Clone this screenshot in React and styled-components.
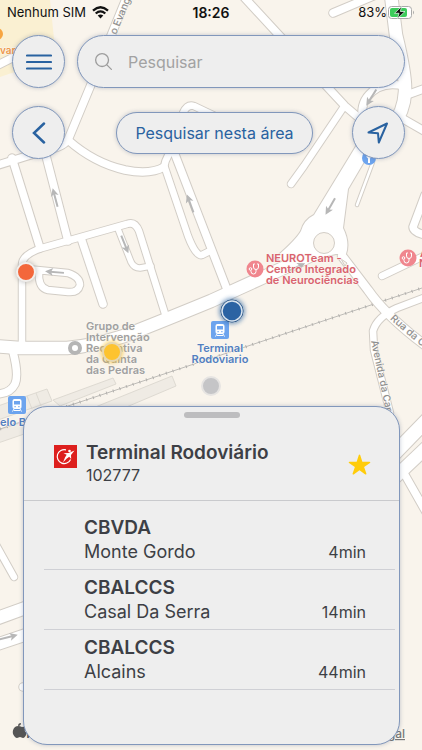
import React from "react";
import styled, { createGlobalStyle } from "styled-components";
import { IoSearchOutline, IoStar } from "react-icons/io5";

const GlobalStyle = createGlobalStyle`
  * {
    box-sizing: border-box;
  }

  body {
    margin: 0;
    background: #f9f4ec;
    font-family: Inter, "Liberation Sans", sans-serif;
    color: #3d3f45;
  }
`;

const Screen = styled.main`
  position: relative;
  min-height: 100vh;
  display: flex;
  flex-direction: column;
  overflow: hidden;
`;

const MapCanvas = styled.svg`
  position: absolute;
  top: 0;
  left: 0;
  width: 100%;
  height: 100%;
  z-index: -1;
`;

const MapLabel = styled.text`
  font-size: ${props => props.$size || 11}px;
  font-weight: ${props => props.$weight || 500};
  fill: ${props => props.$color};
  text-anchor: ${props => props.$anchor || "start"};
  stroke: #fbf8f3;
  stroke-width: 1px;
  paint-order: stroke;
`;

const StatusBar = styled.header`
  display: grid;
  grid-template-columns: 1fr auto 1fr;
  align-items: center;
  height: 24px;
  padding: 0 7px;
  font-size: 13px;
  color: #111;
`;

const StatusGroup = styled.div`
  display: flex;
  align-items: center;
  gap: ${props => props.$gap}px;
  justify-content: ${props => (props.$end ? "flex-end" : "flex-start")};
`;

const Time = styled.time`
  font-size: 14px;
  font-weight: 600;
`;

const Toolbar = styled.div`
  display: flex;
  align-items: center;
  justify-content: space-between;
  gap: 12px;
  padding: 0 17px 0 12px;
  margin-top: ${props => props.$top}px;
`;

const RoundButton = styled.button`
  display: flex;
  align-items: center;
  justify-content: center;
  flex: none;
  width: 53px;
  height: 53px;
  padding: 0;
  border: 1px solid #8197bb;
  border-radius: 50%;
  background: #eeeeee;
  color: #2962a0;
  box-shadow: 0 0 4px rgba(60, 80, 120, 0.3);
`;

const SearchBox = styled.label`
  display: flex;
  align-items: center;
  gap: 14px;
  flex: 1;
  min-width: 0;
  height: 53px;
  padding: 0 15px;
  border: 1px solid #8197bb;
  border-radius: 27px;
  background: #eeeeee;
  color: #9c9c9c;
  box-shadow: 0 0 4px rgba(60, 80, 120, 0.3);
`;

const SearchInput = styled.input`
  flex: 1;
  min-width: 0;
  padding: 0;
  border: 0;
  outline: 0;
  background: transparent;
  font: 400 16px Inter, sans-serif;
  color: #3d3f45;

  &::placeholder {
    color: #a2a2a2;
    opacity: 1;
  }
`;

const AreaButton = styled.button`
  height: 42px;
  margin-left: 12px;
  padding: 0 18px;
  border: 1px solid #8197bb;
  border-radius: 21px;
  background: #eeeeee;
  color: #2962a0;
  font: 400 16px Inter, sans-serif;
  white-space: nowrap;
  box-shadow: 0 0 4px rgba(60, 80, 120, 0.3);
`;

const Sheet = styled.section`
  margin: auto 22px 5px 23px;
  padding-bottom: 54px;
  border: 1px solid #8197bb;
  border-radius: 24px;
  background: #eeeeee;
  box-shadow: 0 0 4px rgba(60, 80, 120, 0.3);
`;

const Handle = styled.div`
  width: 56px;
  height: 6px;
  margin: 5px auto 0;
  border-radius: 3px;
  background: #bdbdbf;
`;

const StopHeader = styled.div`
  display: flex;
  align-items: center;
  gap: 9px;
  height: 83px;
  padding: 10px 28px 0 30px;
  border-bottom: 1px solid #c9cacd;
`;

const StopInfo = styled.div`
  flex: 1;
  line-height: 22px;
`;

const StopName = styled.h1`
  margin: 0;
  font-size: 19px;
  line-height: 22px;
  font-weight: 600;
`;

const StopCode = styled.div`
  font-size: 16px;
`;

const LogoSvg = styled.svg`
  display: block;
  flex: none;
  margin-bottom: 16px;
`;

const StarButton = styled.button`
  display: flex;
  padding: 0;
  border: 0;
  background: transparent;
  color: #ffcc0a;
`;

const Departures = styled.ul`
  margin: 0;
  padding: 9px 4px 0 20px;
  list-style: none;
`;

const Departure = styled.li`
  display: flex;
  align-items: flex-end;
  justify-content: space-between;
  height: 60px;
  padding: 0 29px 5px 40px;
  border-bottom: 1px solid #cfd0d5;
  line-height: 24px;
`;

const Line = styled.div`
  font-size: 19px;
  font-weight: 600;
`;

const Destination = styled.div`
  font-size: 18px;
`;

const Wait = styled.div`
  font-size: 16px;
`;

const roads = [
  { d: "M128 -6L90 87L68 140Q62 148 40 152L-5 166", w: 8 },
  { d: "M68 140Q94 163 125 170Q150 175 164 167", w: 8 },
  { d: "M164 167Q166 155 176 146L183 113Q187 104 194 106L215 116", w: 7 },
  { d: "M165 168L188 236Q196 257 202 255L210 251", w: 7 },
  { d: "M174 152L228 292", w: 8 },
  { d: "M12 158L40 248", w: 8 },
  { d: "M45 152L68 241", w: 8 },
  { d: "M-4 66L18 55", w: 8 },
  { d: "M22 348V264Q23 254 42 248L127 224Q135 221 139 231L167 320", w: 7 },
  { d: "M81 238L103 304", w: 8 },
  { d: "M118 229L131 262Q134 268 140 268L151 266", w: 6 },
  { d: "M27 269L68 273Q80 277 80 285Q78 293 68 292L48 290Q38 288 39 272", w: 7 },
  { d: "M13 352Q19 375 15 384Q10 394 -4 394", w: 8 },
  { d: "M242 -5L278 34L345 106L366 124", w: 8 },
  { d: "M343 108L304 166L291 184", w: 7 },
  { d: "M333 13L378 -6", w: 8 },
  { d: "M391 -5L396 35Q406 76 405 92Q404 112 392 126", w: 13 },
  { d: "M404 86Q380 80 367 97Q359 108 364 124", w: 8 },
  { d: "M404 96L426 88", w: 8 },
  { d: "M398 116L426 132", w: 8 },
  { d: "M373 162L357 205", w: 3 },
  { d: "M425 195L413 227Q413 232 425 235", w: 8 },
  { d: "M426 255L382 276", w: 7 },
  { d: "M426 297L397 308Q377 317 373 331L374 350L390 413", w: 7 },
  { d: "M342 256L368 290Q386 316 426 346", w: 9 },
  { d: "M405 475L426 512", w: 8 },
  { d: "M390 458L428 419", w: 14 },
  { d: "M390 482L428 446", w: 13 },
  { d: "M-5 543L14 577", w: 7 },
  { d: "M-5 619L28 607", w: 13 },
  { d: "M-5 645L28 634", w: 12 },
  { d: "M23 687H30", w: 8 },
  { d: "M-5 346L20 348H67Q93 346 124 336Q160 322 211 301L266 276L318 252", w: 13 },
];

const roundabout =
  "M361 138L314 215Q304 220 301 231Q296 240 275 258L290 264L336 254L346 254Q350 242 343 228L348 189L378 138Z";

const streetArrows = [
  { x: 55, y: 197, r: -105 },
  { x: 190, y: 203, r: -110 },
  { x: 125, y: 245, r: 68 },
  { x: 54, y: 272, r: 185 },
  { x: 371, y: 98, r: 122 },
  { x: 330, y: 207, r: 120 },
  { x: 297, y: 267, r: -24 },
  { x: 9, y: 637, r: -14 },
];

const departures = [
  { id: 1, line: "CBVDA", destination: "Monte Gordo", wait: "4min" },
  { id: 2, line: "CBALCCS", destination: "Casal Da Serra", wait: "14min" },
  { id: 3, line: "CBALCCS", destination: "Alcains", wait: "44min" },
];

const TrainBadge = ({ x, y }) => (
  <g transform={`translate(${x} ${y})`}>
    <rect width="18" height="18" rx="2" fill="#6da4ee" />
    <rect x="4.5" y="3" width="9" height="10" rx="2" fill="#fff" />
    <rect x="6" y="5" width="6" height="3.5" fill="#6da4ee" />
    <path d="M6.5 10.7h1.2M10.3 10.7h1.2" stroke="#6da4ee" strokeWidth="1.3" />
    <path d="M6 13l-1.5 2.5M12 13l1.5 2.5M6 14.5h6" stroke="#fff" />
  </g>
);

const ClinicBadge = ({ x, y }) => (
  <g transform={`translate(${x} ${y})`} fill="none" stroke="#fff">
    <circle r="8.5" fill="#f0868e" stroke="none" />
    <path d="M0-5h-1.500v3a2.500 2.500 0 0 0 5 0v-3h-1.500M1 .5v2a2.500 2.500 0 0 1-5 0v-1" />
    <circle cx="-4.500" cy="0" r="1.300" />
  </g>
);

const StreetMap = () => (
  <MapCanvas viewBox="0 0 422 750" preserveAspectRatio="xMidYMid slice">
    <defs>
      <path id="rua" d="M390 319Q406 334 434 356" />
      <path id="avenida" d="M371 341L388 422" />
      <path id="evang" d="M116 35L133 -6" />
      <filter id="glow" x="-50%" y="-50%" width="200%" height="200%">
        <feGaussianBlur stdDeviation="2" />
      </filter>
    </defs>
    <rect width="422" height="750" fill="#f9f4ec" />
    <path d="M0 0H50L56 58L0 77Z" fill="#faf0d2" />
    <g fill="#efebe4" stroke="#dedad2">
      <path d="M-2 406L47 389L52 401L-2 420ZM27 396l5 13M36 393l5 13" />
      <path d="M53 400L113 378L116 384L60 406Z" />
      <path d="M88 410L172 376L176 386L110 414Z" />
      <path d="M-2 430L30 420V432L-2 443Z" />
    </g>
    <path d="M0 429L65 407L245 347L422 288" fill="none" stroke="#bebcb8" />
    <path
      d="M0 429L65 407L245 347L422 288"
      fill="none"
      stroke="#b3b1ae"
      strokeWidth="3"
      strokeDasharray="1 6"
    />
    <g fill="none" stroke="#d2cdc6" strokeLinecap="round" strokeLinejoin="round">
      {roads.map(road => (
        <path key={road.d} d={road.d} strokeWidth={road.w + 1.5} />
      ))}
    </g>
    <path d={roundabout} fill="#fff" stroke="#d2cdc6" strokeWidth="2" />
    <g fill="none" stroke="#fff" strokeLinecap="round" strokeLinejoin="round">
      {roads.map(road => (
        <path key={road.d} d={road.d} strokeWidth={road.w - 0.5} />
      ))}
    </g>
    <path d={roundabout} fill="#fff" />
    <circle cx="324" cy="243" r="10.5" fill="#f9f4ec" stroke="#d2cdc6" />
    <path d="M341 259l6 4l-2 3z" fill="#f9f4ec" stroke="#d2cdc6" />
    {streetArrows.map(arrow => (
      <g
        key={`${arrow.x}-${arrow.y}`}
        transform={`translate(${arrow.x} ${arrow.y}) rotate(${arrow.r})`}
      >
        <path d="M-10 0H4" stroke="#b7b7b7" strokeWidth="2" />
        <path d="M9 0L1 -4L3 0L1 4Z" fill="#b7b7b7" />
      </g>
    ))}

    <MapLabel $color="#8f8f8f" $size={10}>
      <textPath href="#rua">Rua da Ca</textPath>
    </MapLabel>
    <MapLabel $color="#8f8f8f" $size={10}>
      <textPath href="#avenida">Avenida da Car</textPath>
    </MapLabel>
    <MapLabel $color="#8f8f8f" $size={10}>
      <textPath href="#evang">o Evang</textPath>
    </MapLabel>
    <circle cx="-3" cy="34" r="6" fill="#f7a541" />
    <MapLabel x="0" y="54" $color="#ee994c" $size={10} $weight={600}>
      var
    </MapLabel>

    <ClinicBadge x={255} y={269} />
    <MapLabel $color="#d9636e" $size={11} $weight={600}>
      <tspan x="266" y="262">NEUROTeam -</tspan>
      <tspan x="266" y="273">Centro Integrado</tspan>
      <tspan x="266" y="284">de Neurociências</tspan>
    </MapLabel>
    <ClinicBadge x={408} y={258} />
    <MapLabel $color="#d9636e" $size={11} $weight={600}>
      <tspan x="420" y="257">A</tspan>
      <tspan x="419" y="267">N</tspan>
    </MapLabel>

    <circle cx="75" cy="348" r="5" fill="#fff" stroke="#b5b5b5" strokeWidth="4" />
    <MapLabel $color="#a0a0a0" $size={11} $weight={600}>
      <tspan x="86" y="330">Grupo de</tspan>
      <tspan x="86" y="341">Intervenção</tspan>
      <tspan x="86" y="352">Recreativa</tspan>
      <tspan x="86" y="363">da Quinta</tspan>
      <tspan x="86" y="374">das Pedras</tspan>
    </MapLabel>

    <TrainBadge x={211} y={321} />
    <MapLabel $color="#527fc0" $size={11} $anchor="middle" $weight={600}>
      <tspan x="220" y="352">Terminal</tspan>
      <tspan x="220" y="363">Rodoviario</tspan>
    </MapLabel>
    <TrainBadge x={8} y={396} />
    <MapLabel x="0" y="426" $color="#527fc0" $size={11} $weight={600}>
      elo B
    </MapLabel>

    <circle cx="369" cy="158" r="7" fill="#6da4ee" />
    <path d="M369 163v-5m-2-2l2 2 2-2" fill="none" stroke="#fff" strokeWidth="2" />

    <circle cx="26" cy="272" r="11" fill="#777" opacity="0.35" filter="url(#glow)" />
    <circle cx="26" cy="272" r="9" fill="#f3673b" stroke="#f2efec" strokeWidth="2" />
    <circle cx="112" cy="352" r="11" fill="#fcc735" opacity="0.7" filter="url(#glow)" />
    <circle cx="112" cy="352" r="9" fill="#fdc32f" stroke="#e5d7b4" strokeWidth="2" />
    <circle cx="232" cy="311" r="13" fill="#2962a0" opacity="0.6" filter="url(#glow)" />
    <circle cx="232" cy="311" r="11" fill="#2b63a3" stroke="#234d7d" />
    <circle cx="232" cy="311" r="10" fill="none" stroke="#dae4ee" strokeWidth="1.5" />
    <circle cx="211" cy="386" r="9" fill="#c5c5c7" stroke="#e6e4e2" strokeWidth="2" />

    <path
      d="M22 727q-4-2-7 0q-3 3-2 7q2 4 4 4l3-1 3 1q2 0 4-5q-4-2-1-5q-2-2-4-1zM18 726q0-3 3-3q0 3-3 3z"
      fill="#555"
    />
    <MapLabel x="26" y="738" $color="#555" $size={15}>
      Maps
    </MapLabel>
    <MapLabel
      x="405"
      y="738"
      $color="#777"
      $size={12}
      $anchor="end"
      textDecoration="underline"
    >
      Legal
    </MapLabel>
  </MapCanvas>
);

const WifiIcon = () => (
  <svg width="17" height="13" viewBox="0 0 17 13">
    <g fill="none" stroke="#111" strokeWidth="2.3">
      <path d="M1 4.6Q8.500 -2 16 4.600" />
      <path d="M3.700 7.500Q8.500 3.300 13.300 7.500" />
    </g>
    <path d="M5.700 9.600Q8.500 7.300 11.300 9.600L8.500 12.500Z" fill="#111" />
  </svg>
);

const BatteryIcon = () => (
  <svg width="27" height="13" viewBox="0 0 27 13">
    <rect x=".5" y=".5" width="23" height="12" rx="3" fill="#fff" stroke="#aaa" />
    <rect x="2" y="2" width="17" height="9" rx="2" fill="#3ccb5b" />
    <path d="M25 4.500q2 2 0 4z" fill="#aaa" />
    <path
      d="M13.500 0.500L6.500 7.300H11L9.500 12.500L17 5.500H12.400Z"
      fill="#111"
      stroke="#d9f5df"
      strokeWidth=".8"
    />
  </svg>
);

const OperatorLogo = () => (
  <LogoSvg width="23" height="23" viewBox="0 0 23 23">
    <rect width="23" height="23" fill="#dd1f1d" />
    <path
      d="M12 4.800A7 7 0 1 0 16.600 14.500"
      fill="none"
      stroke="#fff"
      strokeWidth="1.200"
    />
    <circle cx="15.500" cy="6" r="1.300" fill="#fff" />
    <path
      d="M9.500 8.200l5-.2 6-2.500-3.500 4.500.2 4-2-2.200-2.700 2-3.500 3.700 2-5 1.700-2.800z"
      fill="#fff"
    />
  </LogoSvg>
);

const App = () => (
  <>
    <GlobalStyle />
    <Screen>
      <StreetMap />
      <StatusBar>
        <StatusGroup $gap={6}>
          Nenhum SIM
          <WifiIcon />
        </StatusGroup>
        <Time>18:26</Time>
        <StatusGroup $gap={1} $end>
          83%
          <BatteryIcon />
        </StatusGroup>
      </StatusBar>

      <Toolbar $top={11}>
        <RoundButton aria-label="Menu">
          <svg width="26" height="16" viewBox="0 0 26 16">
            <path
              d="M1 1.500H25M1 8H25M1 14.500H25"
              stroke="currentColor"
              strokeWidth="2.200"
              strokeLinecap="round"
            />
          </svg>
        </RoundButton>
        <SearchBox>
          <IoSearchOutline size={21} />
          <SearchInput type="text" aria-label="Pesquisar" placeholder="Pesquisar" />
        </SearchBox>
      </Toolbar>

      <Toolbar $top={18}>
        <RoundButton aria-label="Voltar">
          <svg width="14" height="22" viewBox="0 0 14 22">
            <path
              d="M12 1.500L2 11L12 20.500"
              fill="none"
              stroke="currentColor"
              strokeWidth="2.500"
              strokeLinecap="round"
            />
          </svg>
        </RoundButton>
        <AreaButton>Pesquisar nesta área</AreaButton>
        <RoundButton aria-label="Localização">
          <svg width="22" height="22" viewBox="0 0 22 22">
            <path
              d="M1.500 10.500L20 1.500L11.800 20.500L11 11.300Z"
              fill="none"
              stroke="currentColor"
              strokeWidth="2"
              strokeLinejoin="round"
            />
          </svg>
        </RoundButton>
      </Toolbar>

      <Sheet>
        <Handle />
        <StopHeader>
          <OperatorLogo />
          <StopInfo>
            <StopName>Terminal Rodoviário</StopName>
            <StopCode>102777</StopCode>
          </StopInfo>
          <StarButton aria-label="Favorito">
            <IoStar size={23} />
          </StarButton>
        </StopHeader>
        <Departures>
          {departures.map(departure => (
            <Departure key={departure.id}>
              <div>
                <Line>{departure.line}</Line>
                <Destination>{departure.destination}</Destination>
              </div>
              <Wait>{departure.wait}</Wait>
            </Departure>
          ))}
        </Departures>
      </Sheet>
    </Screen>
  </>
);

export default App;
